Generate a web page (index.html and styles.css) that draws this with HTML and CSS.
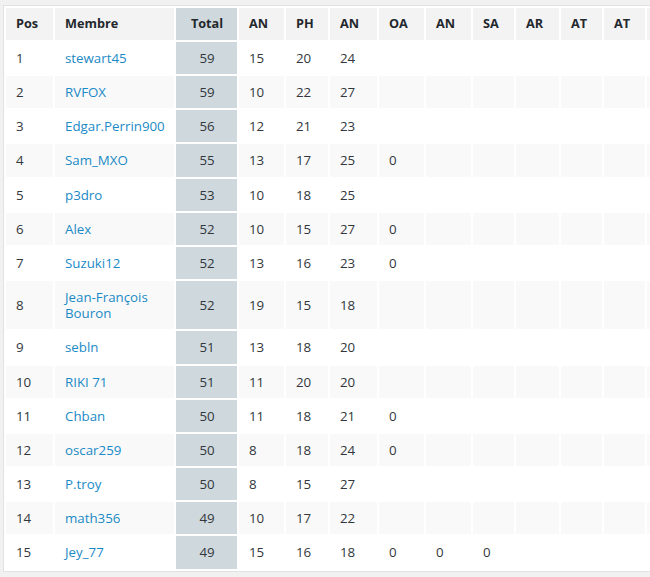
FILE: index.html
```html
<!DOCTYPE html>
<html lang="fr">
<head>
<meta charset="utf-8">
<title>Classement</title>
<link rel="stylesheet" href="styles.css">
</head>
<body>
<div class="wrap">
  <div class="box">
    <table class="ranking">
      <thead>
        <tr>
          <th class="c-pos">Pos</th>
          <th class="c-mem">Membre</th>
          <th class="c-tot total">Total</th>
          <th class="c-an1">AN</th>
          <th class="c-ph">PH</th>
          <th class="c-an2">AN</th>
          <th class="c-oa">OA</th>
          <th class="c-an3">AN</th>
          <th class="c-sa">SA</th>
          <th class="c-ar">AR</th>
          <th class="c-at1">AT</th>
          <th class="c-at2">AT</th>
          <th class="c-x"></th>
        </tr>
      </thead>
      <tbody>
        <tr><td>1</td><td><a href="#">stewart45</a></td><td class="total">59</td><td>15</td><td>20</td><td>24</td><td></td><td></td><td></td><td></td><td></td><td></td><td></td></tr>
        <tr><td>2</td><td><a href="#">RVFOX</a></td><td class="total">59</td><td>10</td><td>22</td><td>27</td><td></td><td></td><td></td><td></td><td></td><td></td><td></td></tr>
        <tr><td>3</td><td><a href="#">Edgar.Perrin900</a></td><td class="total">56</td><td>12</td><td>21</td><td>23</td><td></td><td></td><td></td><td></td><td></td><td></td><td></td></tr>
        <tr><td>4</td><td><a href="#">Sam_MXO</a></td><td class="total">55</td><td>13</td><td>17</td><td>25</td><td>0</td><td></td><td></td><td></td><td></td><td></td><td></td></tr>
        <tr><td>5</td><td><a href="#">p3dro</a></td><td class="total">53</td><td>10</td><td>18</td><td>25</td><td></td><td></td><td></td><td></td><td></td><td></td><td></td></tr>
        <tr><td>6</td><td><a href="#">Alex</a></td><td class="total">52</td><td>10</td><td>15</td><td>27</td><td>0</td><td></td><td></td><td></td><td></td><td></td><td></td></tr>
        <tr><td>7</td><td><a href="#">Suzuki12</a></td><td class="total">52</td><td>13</td><td>16</td><td>23</td><td>0</td><td></td><td></td><td></td><td></td><td></td><td></td></tr>
        <tr><td>8</td><td><a href="#">Jean-François Bouron</a></td><td class="total">52</td><td>19</td><td>15</td><td>18</td><td></td><td></td><td></td><td></td><td></td><td></td><td></td></tr>
        <tr><td>9</td><td><a href="#">sebln</a></td><td class="total">51</td><td>13</td><td>18</td><td>20</td><td></td><td></td><td></td><td></td><td></td><td></td><td></td></tr>
        <tr><td>10</td><td><a href="#">RIKI 71</a></td><td class="total">51</td><td>11</td><td>20</td><td>20</td><td></td><td></td><td></td><td></td><td></td><td></td><td></td></tr>
        <tr><td>11</td><td><a href="#">Chban</a></td><td class="total">50</td><td>11</td><td>18</td><td>21</td><td>0</td><td></td><td></td><td></td><td></td><td></td><td></td></tr>
        <tr><td>12</td><td><a href="#">oscar259</a></td><td class="total">50</td><td>8</td><td>18</td><td>24</td><td>0</td><td></td><td></td><td></td><td></td><td></td><td></td></tr>
        <tr><td>13</td><td><a href="#">P.troy</a></td><td class="total">50</td><td>8</td><td>15</td><td>27</td><td></td><td></td><td></td><td></td><td></td><td></td><td></td></tr>
        <tr><td>14</td><td><a href="#">math356</a></td><td class="total">49</td><td>10</td><td>17</td><td>22</td><td></td><td></td><td></td><td></td><td></td><td></td><td></td></tr>
        <tr><td>15</td><td><a href="#">Jey_77</a></td><td class="total">49</td><td>15</td><td>16</td><td>18</td><td>0</td><td>0</td><td>0</td><td></td><td></td><td></td><td></td></tr>
      </tbody>
    </table>
  </div>
</div>
</body>
</html>
```
FILE: styles.css
```css
html, body {
  margin: 0;
  padding: 0;
  background: #f1f1f1;
  overflow: hidden;
}
body {
  font-family: "Open Sans", "Liberation Sans", sans-serif;
  font-size: 13.3px;
  color: #32373c;
}
.wrap {
  padding: 5px 0 0 3px;
  width: 760px;
}
.box {
  background: #fff;
  border: 1px solid #e2e2e2;
  display: inline-block;
}
.ranking {
  border-collapse: separate;
  border-spacing: 2px;
  table-layout: fixed;
}
.ranking th,
.ranking td {
  box-sizing: border-box;
  padding: 8px 9px 8px 10px;
  line-height: 16.15px;
  text-align: left;
  vertical-align: middle;
}
.ranking th {
  background: #f3f3f3;
  font-weight: 700;
  font-size: 12.7px;
  line-height: 15px;
  padding-top: 8px;
  padding-bottom: 9px;
  color: #23282d;
}
.ranking tbody tr:nth-child(even) td {
  background: #f9f9f9;
}
.ranking .total,
.ranking tbody tr td.total {
  background: #cfd8dc;
  text-align: center;
}
.ranking a {
  color: #1a8ac6;
  text-decoration: none;
}
.c-pos { width: 47px; }
.c-mem { width: 119px; }
.c-tot { width: 61px; }
.c-an1 { width: 45px; }
.c-ph { width: 42px; }
.c-an2 { width: 47px; }
.c-oa { width: 45px; }
.c-an3 { width: 45px; }
.c-sa { width: 41px; }
.c-ar { width: 43px; }
.c-at1 { width: 41px; }
.c-at2 { width: 41px; }
.c-x { width: 41px; }
```
